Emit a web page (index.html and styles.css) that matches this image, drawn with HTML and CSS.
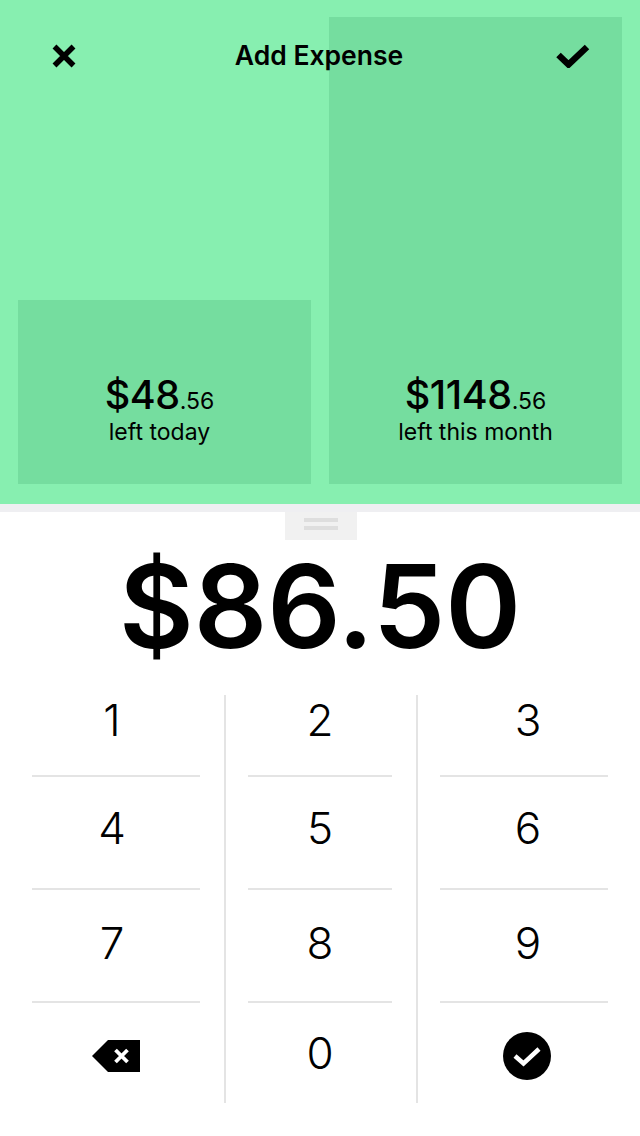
FILE: index.html
```html
<!DOCTYPE html>
<html lang="en">
<head>
    <meta charset="UTF-8">
    <meta name="viewport" content="width=device-width, initial-scale=1.0">
    <title>Add Expense</title>
    <link rel="stylesheet" href="styles.css">
</head>
<body>
    <div class="top">
        <div class="nav">
            <svg class="nav-icon" width="24" height="24" viewBox="0 0 24 24"><path d="M2.5 2.5L21.5 21.5M21.5 2.5L2.5 21.5" fill="none" stroke="#000" stroke-width="5.5"/></svg>
            <h1>Add Expense</h1>
            <svg class="nav-icon" width="34" height="24" viewBox="0 0 34 24"><path d="M2.5 11L12.5 20.5L31 3" fill="none" stroke="#000" stroke-width="6.5"/></svg>
        </div>
        <div class="bars">
            <div class="bar bar-today">
                <div class="money">$48<small>.56</small></div>
                <div class="note">left today</div>
            </div>
            <div class="bar bar-month">
                <div class="money">$1148<small>.56</small></div>
                <div class="note">left this month</div>
            </div>
        </div>
    </div>
    <div class="strip"></div>
    <div class="handle"><span></span><span></span></div>
    <div class="amount">$86.50</div>
    <div class="keypad">
        <div class="key left row-1"><div class="key-in">1</div></div>
        <div class="key mid row-1"><div class="key-in">2</div></div>
        <div class="key right row-1"><div class="key-in">3</div></div>
        <div class="key left row-2"><div class="key-in">4</div></div>
        <div class="key mid row-2"><div class="key-in">5</div></div>
        <div class="key right row-2"><div class="key-in">6</div></div>
        <div class="key left row-3"><div class="key-in">7</div></div>
        <div class="key mid row-3"><div class="key-in">8</div></div>
        <div class="key right row-3"><div class="key-in">9</div></div>
        <div class="key left row-4"><div class="key-in back-in">
            <svg class="icon-back" width="48" height="32" viewBox="0 0 48 32"><path d="M16 0H48V32H16L0 16Z" fill="#000"/><path d="M23.5 10L35.5 22M35.5 10L23.5 22" stroke="#fff" stroke-width="3.8" fill="none"/></svg>
        </div></div>
        <div class="key mid row-4"><div class="key-in">0</div></div>
        <div class="key right row-4"><div class="key-in ok-in">
            <svg class="icon-ok" width="48" height="48" viewBox="0 0 48 48"><circle cx="24" cy="24" r="24" fill="#000"/><path d="M12 24L20.5 31.5L36 17" stroke="#fff" stroke-width="4.5" fill="none"/></svg>
        </div></div>
    </div>
</body>
</html>
```

FILE: styles.css
```css
* { margin: 0; padding: 0; box-sizing: border-box; }
body { background: #fff; color: #000; font-family: Inter, "Liberation Sans", sans-serif; }

/* Top green area */
.top { position: relative; height: 504px; background: #87efb0; padding: 17px 18px 20px; }
.nav { position: absolute; top: 38px; left: 52px; right: 50px; height: 36px; display: flex; justify-content: space-between; align-items: center; }
.nav h1 { font-size: 26.5px; font-weight: 600; line-height: 34px; margin: 0 0 3px 6px; }
.nav-icon { display: block; }
.bars { height: 467px; display: grid; grid-template-columns: 1fr 1fr; align-items: end; gap: 18px; }
.bar { background: #75dd9f; text-align: center; }
.bar-today { height: 184px; padding: 77px 10px 0 0; }
.bar-month { height: 467px; padding-top: 360px; }
.money { font-size: 39.5px; font-weight: 500; line-height: 36px; letter-spacing: -0.4px; }
.money small { font-size: 23px; font-weight: 400; letter-spacing: 0; }
.note { font-size: 23px; line-height: 27px; font-weight: 400; }

/* Strip and drag handle */
.strip { height: 8px; background: #efeff2; }
.handle { width: 72px; height: 28px; margin-left: 285px; background: #f1f1f1; padding-top: 6px; }
.handle span { display: block; width: 34px; height: 4px; margin: 0 auto 4px; background: #dedede; }

.amount { height: 155px; text-align: center; font-size: 115px; font-weight: 600; line-height: 133px; }

/* Keypad */
.keypad { display: grid; grid-template-columns: 226px 192px 222px; grid-template-rows: 82px 113px 113px 100px; height: 408px; }
.key { font-size: 44px; font-weight: 300; line-height: 50px; text-align: center; }
.key.left { padding: 0 24px 0 32px; border-right: 2px solid #e4e4e4; }
.key.mid { padding: 0 24px 0 22px; border-right: 2px solid #e4e4e4; }
.key.right { padding: 0 32px 0 22px; }
.key-in { height: 100%; }
.key.left .key-in { padding-right: 8px; }
.key.right .key-in { padding-left: 8px; }
.row-1 .key-in { padding-top: 0; border-bottom: 2px solid #e4e4e4; }
.row-2 .key-in { padding-top: 26px; border-bottom: 2px solid #e4e4e4; }
.row-3 .key-in { padding-top: 28px; border-bottom: 2px solid #e4e4e4; }
.row-4 .key-in { padding-top: 25px; }
.key.left .back-in { padding-right: 0; }
.key.right .ok-in { padding-left: 6px; }
.icon-back { display: block; margin: 12px auto 0; }
.icon-ok { display: block; margin: 4px auto 0; }
```
